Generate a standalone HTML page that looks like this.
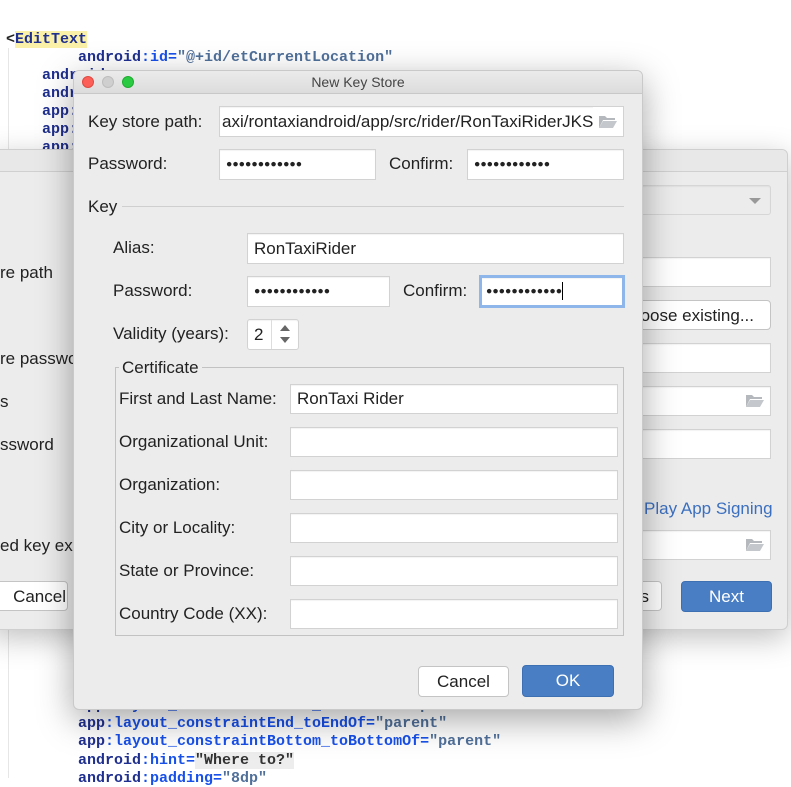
<!DOCTYPE html>
<html><head><meta charset="utf-8"><style>
*{margin:0;padding:0;box-sizing:border-box}
body{width:791px;height:778px;overflow:hidden;background:#fff;position:relative;font-family:"Liberation Sans",sans-serif;font-size:17px;color:#222}
.a{position:absolute;white-space:nowrap}
.code{font-family:"Liberation Mono",monospace;font-weight:bold;font-size:15px;color:#1f2f8f}
.code .k{color:#1750eb}.code .v{color:#50709a}
.f{position:absolute;background:#fff;border:1px solid #d2d2d2;box-shadow:inset 0 1px 1px rgba(0,0,0,.05)}
.l{position:absolute;white-space:nowrap;line-height:20px}
.btn{position:absolute;background:#fff;border:1px solid #c4c4c4;border-radius:4px;text-align:center;line-height:30px;font-size:17px}
.blue{background:#4a7ec4;border-color:#3d6fb3;color:#fff}
.dots{font-size:10.5px;letter-spacing:0;padding-left:6px;line-height:29px}
.fold{position:absolute;width:18px;height:12px}
</style></head><body>
<div style="position:absolute;left:8px;top:48px;width:1px;height:730px;background:#e6e6e6"></div>
<div class="a code" style="left:6px;top:31px;color:#222">&lt;<span style="background:#fbf0a8;color:#1f2f8f">EditText</span></div>
<div class="a code" style="left:78px;top:49px">android<span class="k">:id=</span><span class="v">"@+id/etCurrentLocation"</span></div>
<div class="a code" style="left:42px;top:67px">android</div>
<div class="a code" style="left:42px;top:85px">android</div>
<div class="a code" style="left:42px;top:103px">app:</div>
<div class="a code" style="left:42px;top:121px">app:</div>
<div class="a code" style="left:42px;top:139px">app:</div>
<div class="a code" style="left:78px;top:697px">app<span class="k">:layout_constraintStart_toStartOf=</span><span class="v">"parent"</span></div>
<div class="a code" style="left:78px;top:715px">app<span class="k">:layout_constraintEnd_toEndOf=</span><span class="v">"parent"</span></div>
<div class="a code" style="left:78px;top:733px">app<span class="k">:layout_constraintBottom_toBottomOf=</span><span class="v">"parent"</span></div>
<div class="a code" style="left:78px;top:752px">android<span class="k">:hint=</span><span class="v" style="background:#ededed;color:#333">"Where to?"</span></div>
<div class="a code" style="left:78px;top:770px">android<span class="k">:padding=</span><span class="v">"8dp"</span></div>

<div style="position:absolute;left:-10px;top:149px;width:798px;height:481px;background:#ececec;border:1px solid #cfcfcf;border-radius:6px;box-shadow:0 8px 30px rgba(0,0,0,.25);overflow:hidden">
 <div style="height:22px;background:#e8e8e8;border-bottom:1px solid #d0d0d0"></div>
</div>
<div class="f" style="left:640px;top:185px;width:131px;height:30px;background:#ececec;border-color:#d6d6d6;border-radius:3px"><div style="position:absolute;right:9px;top:12px;border:6px solid transparent;border-top:6px solid #999;border-bottom:0"></div></div>
<div class="f" style="left:640px;top:257px;width:131px;height:30px"></div>
<div class="btn" style="left:600px;top:300px;width:171px;height:30px;text-align:right;padding-right:16px">oose existing...</div>
<div class="f" style="left:640px;top:343px;width:131px;height:30px"></div>
<div class="f" style="left:640px;top:386px;width:131px;height:30px"><svg class="fold" style="right:6px;top:8px" viewBox="0 0 18 12"><path d="M0 0h6l2 2h8v2H4L0 12z" fill="#b5b9bd"/><path d="M4 5h14l-4 7H0z" fill="#c4c8cc"/></svg></div>
<div class="f" style="left:640px;top:429px;width:131px;height:30px"></div>
<div class="l" style="left:644px;top:499px;color:#3b6fbf;font-size:17px">Play App Signing</div>
<div class="f" style="left:640px;top:530px;width:131px;height:30px"><svg class="fold" style="right:6px;top:8px" viewBox="0 0 18 12"><path d="M0 0h6l2 2h8v2H4L0 12z" fill="#b5b9bd"/><path d="M4 5h14l-4 7H0z" fill="#c4c8cc"/></svg></div>
<div class="btn" style="left:600px;top:581px;width:62px;height:30px;text-align:right;padding-right:12px">s</div>
<div class="btn blue" style="left:681px;top:581px;width:91px;height:31px">Next</div>
<div class="btn" style="left:-10px;top:581px;width:78px;height:30px;text-align:right;padding-right:1px">Cancel</div>
<div class="l" style="left:0;top:263px">re path</div>
<div class="l" style="left:0;top:349px">re passwo</div>
<div class="l" style="left:0;top:392px">s</div>
<div class="l" style="left:0;top:435px">ssword</div>
<div class="l" style="left:0;top:536px">ed key ex</div>

<div style="position:absolute;left:73px;top:70px;width:570px;height:640px;background:#ececec;border:1px solid #c9c9c9;border-radius:6px;box-shadow:0 10px 35px rgba(0,0,0,.35);overflow:hidden">
 <div style="height:23px;background:linear-gradient(#ebebeb,#dcdcdc);border-bottom:1px solid #c8c8c8;text-align:center;font-size:14px;line-height:23px;color:#444">New Key Store</div>
 <div style="position:absolute;left:8px;top:5px;width:12px;height:12px;border-radius:50%;background:#fc5f57;border:1px solid #de4a42"></div>
 <div style="position:absolute;left:28px;top:5px;width:12px;height:12px;border-radius:50%;background:#cfcfcf;border:1px solid #bdbdbd"></div>
 <div style="position:absolute;left:48px;top:5px;width:12px;height:12px;border-radius:50%;background:#2acb42;border:1px solid #1fab31"></div>
</div>
<div class="l" style="left:88px;top:112px">Key store path:</div>
<div class="f" style="left:219px;top:106px;width:405px;height:31px;overflow:hidden"><div class="l" style="left:2px;top:5px">axi/rontaxiandroid/app/src/rider/RonTaxiRiderJKS</div><div style="position:absolute;right:0;top:0;width:30px;height:29px;background:#fff"></div><svg class="fold" style="right:6px;top:9px" viewBox="0 0 18 12"><path d="M0 0h6l2 2h8v2H4L0 12z" fill="#b5b9bd"/><path d="M4 5h14l-4 7H0z" fill="#c4c8cc"/></svg></div>
<div class="l" style="left:88px;top:154px">Password:</div>
<div class="f dots" style="left:219px;top:149px;width:157px;height:31px">●●●●●●●●●●●●</div>
<div class="l" style="left:389px;top:154px">Confirm:</div>
<div class="f dots" style="left:467px;top:149px;width:157px;height:31px">●●●●●●●●●●●●</div>
<div class="l" style="left:88px;top:197px">Key</div>
<div style="position:absolute;left:122px;top:206px;width:502px;height:1px;background:#cfcfcf"></div>
<div class="l" style="left:113px;top:238px">Alias:</div>
<div class="f" style="left:247px;top:233px;width:377px;height:31px"><div class="l" style="left:6px;top:5px">RonTaxiRider</div></div>
<div class="l" style="left:113px;top:281px">Password:</div>
<div class="f dots" style="left:247px;top:276px;width:143px;height:31px">●●●●●●●●●●●●</div>
<div class="l" style="left:403px;top:281px">Confirm:</div>
<div class="f dots" style="left:479px;top:275px;width:146px;height:33px;border:3px solid #8fb6ea;line-height:27px;padding-left:4px">●●●●●●●●●●●●<span style="display:inline-block;width:1px;height:18px;background:#000;vertical-align:middle"></span></div>
<div class="l" style="left:113px;top:324px">Validity (years):</div>
<div class="f" style="left:247px;top:319px;width:52px;height:31px;border-radius:3px"><div class="l" style="left:6px;top:5px">2</div><div style="position:absolute;left:23px;top:0;width:1px;height:29px;background:#ddd"></div><div style="position:absolute;left:32px;top:5px;border:5px solid transparent;border-bottom:6px solid #666;border-top:0"></div><div style="position:absolute;left:32px;top:17px;border:5px solid transparent;border-top:6px solid #666;border-bottom:0"></div></div>
<div style="position:absolute;left:115px;top:367px;width:509px;height:269px;border:1px solid #c2c2c2"></div>
<div class="l" style="left:119px;top:358px;background:#ececec;padding:0 3px">Certificate</div>
<div class="l" style="left:119px;top:389px">First and Last Name:</div>
<div class="f" style="left:290px;top:384px;width:328px;height:30px"><div class="l" style="left:6px;top:4px">RonTaxi Rider</div></div>
<div class="l" style="left:119px;top:432px">Organizational Unit:</div>
<div class="f" style="left:290px;top:427px;width:328px;height:30px"></div>
<div class="l" style="left:119px;top:475px">Organization:</div>
<div class="f" style="left:290px;top:470px;width:328px;height:30px"></div>
<div class="l" style="left:119px;top:518px">City or Locality:</div>
<div class="f" style="left:290px;top:513px;width:328px;height:30px"></div>
<div class="l" style="left:119px;top:561px">State or Province:</div>
<div class="f" style="left:290px;top:556px;width:328px;height:30px"></div>
<div class="l" style="left:119px;top:604px">Country Code (XX):</div>
<div class="f" style="left:290px;top:599px;width:328px;height:30px"></div>
<div class="btn" style="left:418px;top:666px;width:91px;height:31px">Cancel</div>
<div class="btn blue" style="left:522px;top:665px;width:92px;height:32px">OK</div>
</body></html>
